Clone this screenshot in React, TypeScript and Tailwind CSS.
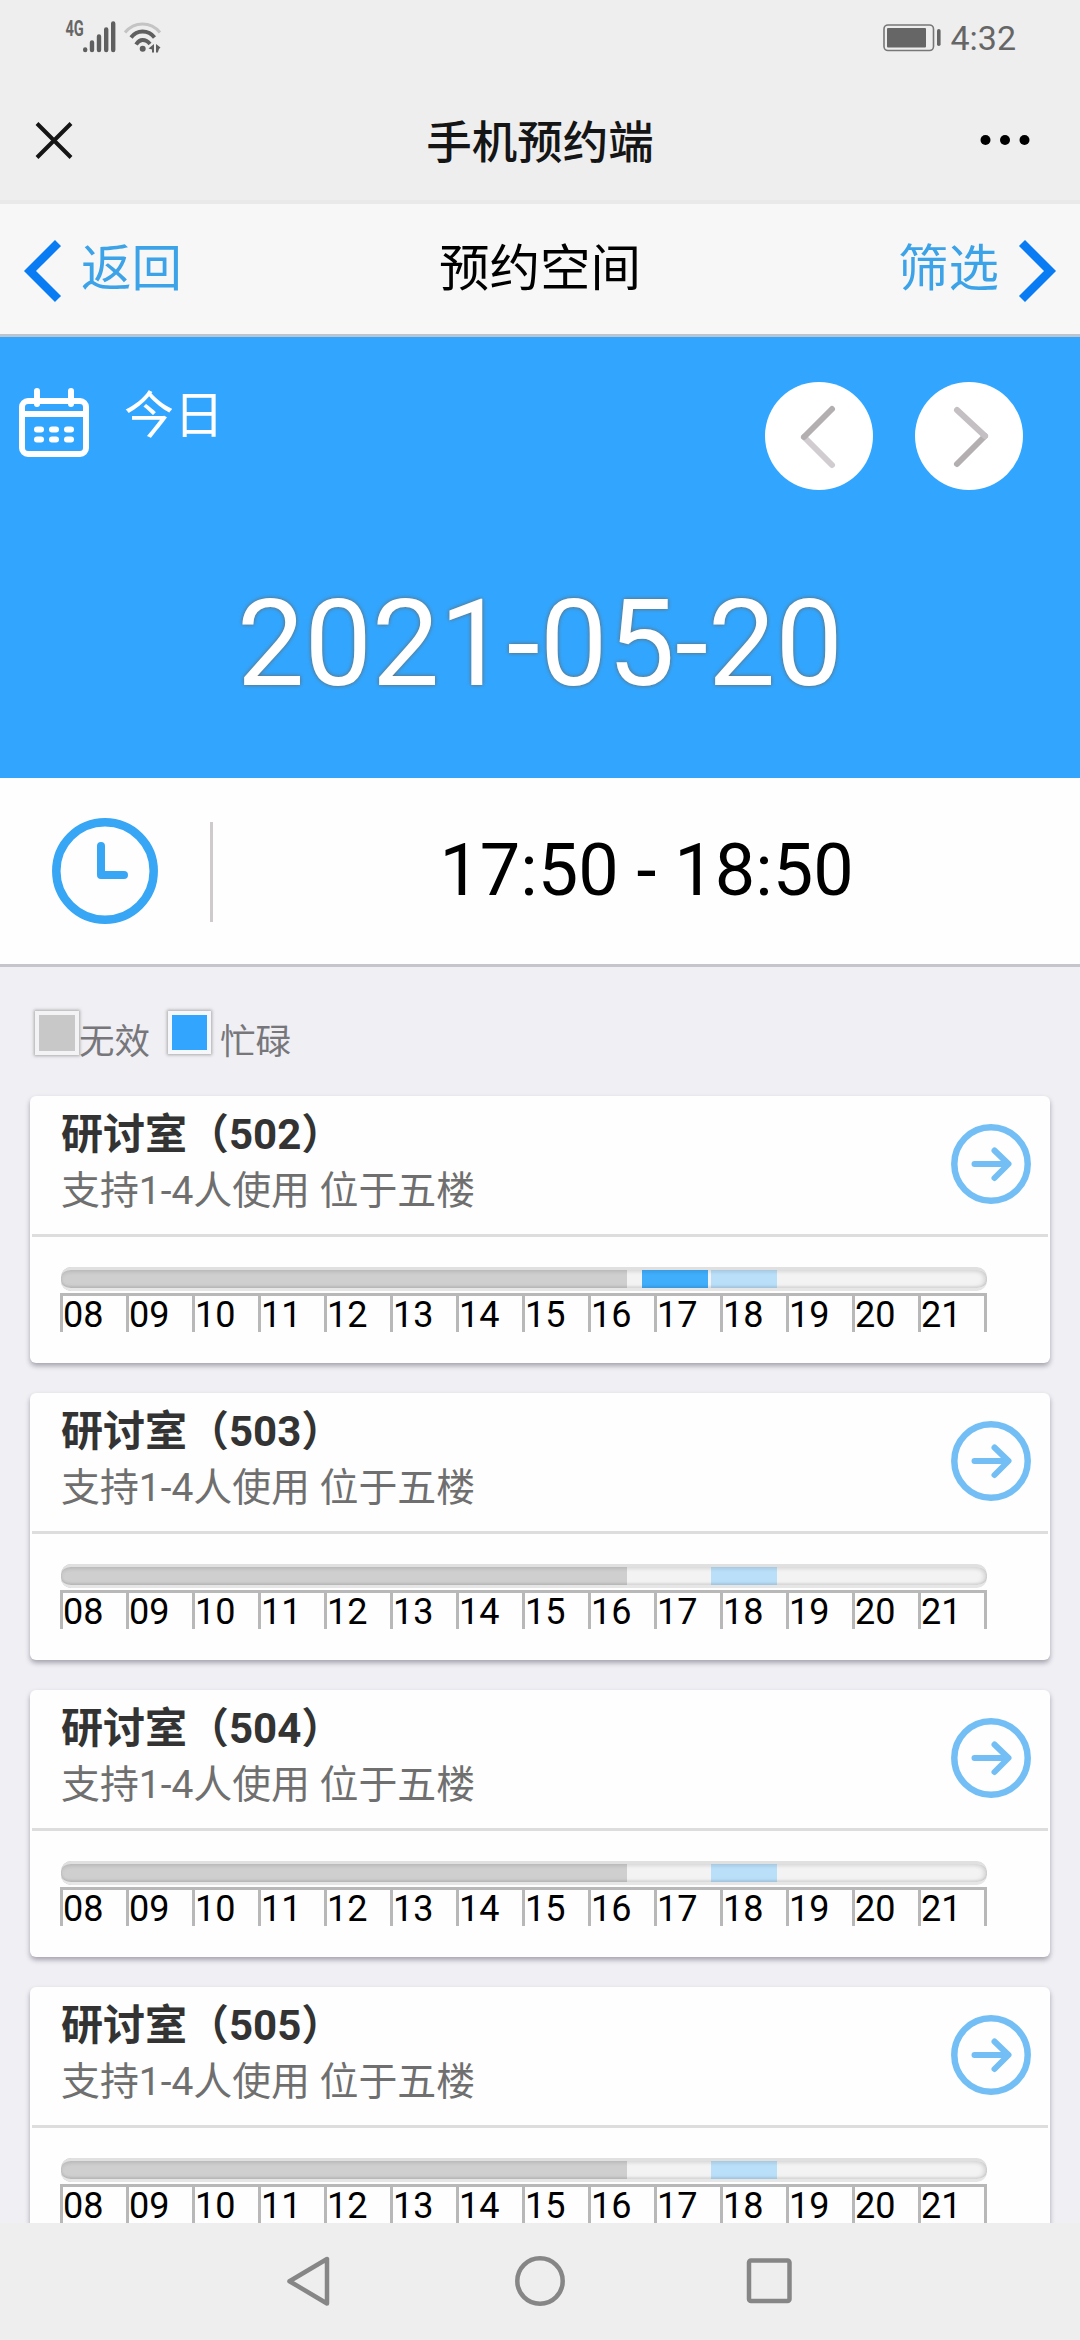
import React from 'react';

const hours = ['08', '09', '10', '11', '12', '13', '14', '15', '16', '17', '18', '19', '20', '21'];

const rooms = [
  { id: '502', busy: true },
  { id: '503', busy: false },
  { id: '504', busy: false },
  { id: '505', busy: false },
];

function StatusBar() {
  return (
    <div className="flex h-[76px] shrink-0 items-start justify-between pl-[62px] pr-[64px] pt-[14px] text-[#666666]">
      <div className="flex">
        <span className="mt-[6px] h-[18px] w-[21px] origin-left scale-x-[0.68] pl-[5px] text-[21.5px] font-bold leading-[18px]">4G</span>
        <svg width="80" height="46" viewBox="83 14 80 46" fill="none">
          <g stroke="#5f5f5f" strokeWidth="4.4" strokeLinecap="round">
            <path d="M85.2 49.5v.5M92 42.5v7.5M99 36.5v13.5M106.2 29.5v20.5M113.2 23.5v26.5" />
          </g>
          <g strokeLinecap="butt" strokeWidth="3">
            <path d="M125 32.5Q132 24 142.500 24Q153 24 160 32.500" stroke="#c4c4c4" />
            <path d="M131 37.500Q135.500 31.500 142.500 31.500Q150 31.500 154.500 37.500" stroke="#5f5f5f" strokeWidth="3.800" />
            <path d="M136 44.500Q139 40 142.500 40Q147 40 150 44" stroke="#5f5f5f" strokeWidth="3.800" />
          </g>
          <circle cx="142.700" cy="48.800" r="3" fill="#5f5f5f" />
          <path d="M148.500 48.500L154 44v8.500h-2v-3zM156 44l4.500 3.500L159 49l-1.200 3.500H156z" fill="#5f5f5f" />
        </svg>
      </div>
      <div className="flex">
        <svg width="60" height="46" viewBox="882 14 60 46" fill="none">
          <rect x="884" y="25" width="49.500" height="25.500" rx="4" stroke="#777" strokeWidth="1.600" />
          <rect x="887" y="28" width="39" height="19.500" rx="1" fill="#666" />
          <rect x="937" y="29" width="3.600" height="17" rx="1.800" fill="#666" />
        </svg>
        <span className="ml-[8px] text-[34px] leading-[49px]">4:32</span>
      </div>
    </div>
  );
}

function TitleBar() {
  return (
    <div className="grid h-[124px] shrink-0 grid-cols-3 items-center px-[33px]">
      <svg width="42" height="42" viewBox="0 0 42 42" className="mt-[5px]">
        <path d="M4 3.500L38 37.500M38 3.500L4 37.500" stroke="#151515" strokeWidth="4" />
      </svg>
      <h1 className="mt-[11px] text-center text-[45.5px] font-medium leading-[60px] text-[#151515]">手机预约端</h1>
      <svg width="50" height="12" viewBox="0 0 50 12" className="ml-auto mr-[17px] mt-[4px]">
        <circle cx="5.500" cy="6" r="5" />
        <circle cx="25" cy="6" r="5" />
        <circle cx="44.500" cy="6" r="5" />
      </svg>
    </div>
  );
}

function NavBar() {
  return (
    <div className="flex h-[137px] shrink-0 items-center justify-between border-b-[3px] border-t-[4px] border-b-[#bcc5cf] border-t-[#e9e9e9] bg-[#f7f7f7] px-[23px] text-[50.5px] leading-[60px]">
      <div className="flex items-center text-[#3da3e8]">
        <svg width="40" height="62" viewBox="0 0 40 62" fill="none" className="mt-[4px]">
          <path d="M35 3L7 31L35 59" stroke="#0a7cf3" strokeWidth="8.500" />
        </svg>
        <span className="ml-[18px]">返回</span>
      </div>
      <span>预约空间</span>
      <div className="flex items-center text-[#3da3e8]">
        <span className="mr-[18px]">筛选</span>
        <svg width="40" height="62" viewBox="0 0 40 62" fill="none" className="mt-[4px]">
          <path d="M5 3L33 31L5 59" stroke="#0a7cf3" strokeWidth="8.500" />
        </svg>
      </div>
    </div>
  );
}

function DatePanel() {
  return (
    <div className="flex h-[441px] shrink-0 flex-col bg-[#32a6ff] text-white">
      <div className="flex items-start pl-[19px] pr-[57px] pt-[45px]">
        <svg width="70" height="76" viewBox="0 0 70 76" fill="none" stroke="white" strokeWidth="6" strokeLinecap="round">
          <rect x="3" y="19" width="64" height="53" rx="6" />
          <path d="M3 32H67" />
          <path d="M18 9V22M52 9V22" />
          <path d="M18 47.500h4M33 47.500h4M48 47.500h4M18 57.500h4M33 57.500h4M48 57.500h4" strokeWidth="6" />
        </svg>
        <span className="ml-[35px] mt-[4px] text-[50px] leading-[60px]">今日</span>
        <div className="ml-auto flex gap-[42px]">
          <button className="flex size-[108px] items-center justify-center rounded-full bg-white">
            <svg width="108" height="108" viewBox="0 0 108 108" fill="none" strokeWidth="6" strokeLinecap="round">
              <path d="M67 83L39 55" stroke="#d0cccf" />
              <path d="M67 27L39 55" stroke="#b3afb1" />
            </svg>
          </button>
          <button className="flex size-[108px] items-center justify-center rounded-full bg-white">
            <svg width="108" height="108" viewBox="0 0 108 108" fill="none" strokeWidth="6" strokeLinecap="round">
              <path d="M42 82L70 54" stroke="#b3afb1" />
              <path d="M42 28L70 54" stroke="#c3bfc2" />
            </svg>
          </button>
        </div>
      </div>
      <div className="mt-[78px] text-center text-[120px] leading-[152px] [text-shadow:0_0_4px_rgba(110,95,75,0.9)]">2021-05-20</div>
    </div>
  );
}

function TimeRow() {
  return (
    <div className="flex h-[189px] shrink-0 items-center border-b-[3px] border-[#c6c5cb] bg-[#fefefe]">
      <svg width="106" height="106" viewBox="0 0 106 106" fill="none" stroke="#37a6f5" strokeWidth="8.500" className="ml-[52px]">
        <circle cx="53" cy="53" r="48.700" />
        <path d="M49 28V57H72" strokeWidth="8" strokeLinecap="round" strokeLinejoin="round" />
      </svg>
      <div className="ml-[52px] mt-[2px] h-[100px] w-[3px] bg-[#cfcbcd]" />
      <span className="flex-1 text-center text-[72px] leading-[84px] text-black">17:50 - 18:50</span>
    </div>
  );
}

function Legend() {
  return (
    <div className="flex h-[129px] shrink-0 items-start pl-[35px] pt-[44px] text-[#77777b]">
      <span className="size-[44px] border-[4px] border-[#f3f2f4] bg-[#c9c8c9] shadow-[0_0_3px_1px_#aaa]" />
      <span className="mt-[10px] text-[35.5px] leading-[42px]">无效</span>
      <span className="ml-[18px] size-[43px] border-[4px] border-[#f6f7fb] bg-[#32a6ff] shadow-[0_0_3px_1px_#aaa]" />
      <span className="ml-[9px] mt-[10px] text-[35.5px] leading-[42px]">忙碌</span>
    </div>
  );
}

function Timeline({ busy }: { busy: boolean }) {
  return (
    <div className="ml-[30px] mt-[30px] w-[927px]">
      <div className="relative ml-px flex h-[24px] w-[926px] overflow-hidden rounded-[10px] bg-[#f4f3f4]">
        <div className="w-[566px] bg-[#cfcfcf]" />
        <div className="w-[15px]" />
        <div className={busy ? 'w-[66px] bg-[#40aefb]' : 'w-[66px]'} />
        <div className="ml-[3px] w-[66px] bg-[#b9dff9]" />
        <div className="absolute inset-0 rounded-[10px] border-y-[3px] border-b-[#e6e6e6] border-t-[#e0e0e0] shadow-[inset_-3px_0_5px_rgba(0,0,0,0.12),inset_0_2px_4px_rgba(0,0,0,0.06),inset_0_-2px_2px_rgba(0,0,0,0.06)]" />
      </div>
      <div className="mt-[2px] flex w-[927px] border-r-[3px] border-t-[3px] border-[#b8b8b8]">
        {hours.map((h) => (
          <div key={h} className="h-[36px] w-[66px] border-l-[3px] border-[#b8b8b8] text-[36px] leading-[38px] text-black">
            {h}
          </div>
        ))}
      </div>
    </div>
  );
}

function RoomCard({ id, busy }: { id: string; busy: boolean }) {
  return (
    <div className="h-[267px] shrink-0 rounded-[6px] bg-[#fefefe] px-[2px] shadow-[0_3px_5px_rgba(60,50,70,0.4)]">
      <div className="flex h-[141px] items-start justify-between border-b-[3px] border-[#dddddd] pl-[29px] pr-[17px]">
        <div className="flex flex-col">
          <span className="mt-[13px] text-[42px] font-bold leading-[51px] text-[#333333]">研讨室（{id}）</span>
          <span className="mt-[5px] text-[38.9px] leading-[51px] text-[#6f6f6f]">支持1-4人使用 位于五楼</span>
        </div>
        <svg width="80" height="80" viewBox="0 0 80 80" fill="none" stroke="#73bff5" strokeWidth="6.500" className="mt-[28px]">
          <circle cx="40" cy="40" r="36.700" />
          <path d="M23.500 40H57M43.500 26.500L57.500 40L43.500 54" strokeLinecap="round" strokeLinejoin="round" strokeWidth="6" />
        </svg>
      </div>
      <div className="-ml-[2px] flex">
        <Timeline busy={busy} />
      </div>
    </div>
  );
}

function SystemNav() {
  return (
    <div className="flex h-[117px] shrink-0 items-start justify-center gap-[179px] bg-[#eeeeee] pt-[32px] text-[#868686]">
      <svg width="50" height="52" viewBox="4 0 50 52" fill="none" stroke="currentColor" strokeWidth="4.500" strokeLinejoin="round">
        <path d="M46 4V48.500L8.500 26.200Z" />
      </svg>
      <svg width="52" height="52" viewBox="0 0 52 52" fill="none" stroke="currentColor" strokeWidth="4.500">
        <circle cx="26" cy="26" r="22.700" />
      </svg>
      <svg width="50" height="52" viewBox="-1 0 50 52" fill="none" stroke="currentColor" strokeWidth="4.500">
        <rect x="3" y="5.500" width="40.500" height="40.500" rx="2" />
      </svg>
    </div>
  );
}

export default function App() {
  return (
    <div
      lang="zh-CN"
      className="flex h-[2340px] w-[1080px] flex-col overflow-hidden bg-[#eeeeee] font-[Roboto,'Noto_Sans_CJK_SC',sans-serif] text-black"
    >
      <StatusBar />
      <TitleBar />
      <NavBar />
      <DatePanel />
      <TimeRow />
      <div className="flex min-h-0 flex-1 flex-col overflow-hidden bg-[#efeff4]">
        <Legend />
        <div className="flex flex-col gap-[30px] px-[30px]">
          {rooms.map((r) => (
            <RoomCard key={r.id} id={r.id} busy={r.busy} />
          ))}
        </div>
      </div>
      <SystemNav />
    </div>
  );
}
